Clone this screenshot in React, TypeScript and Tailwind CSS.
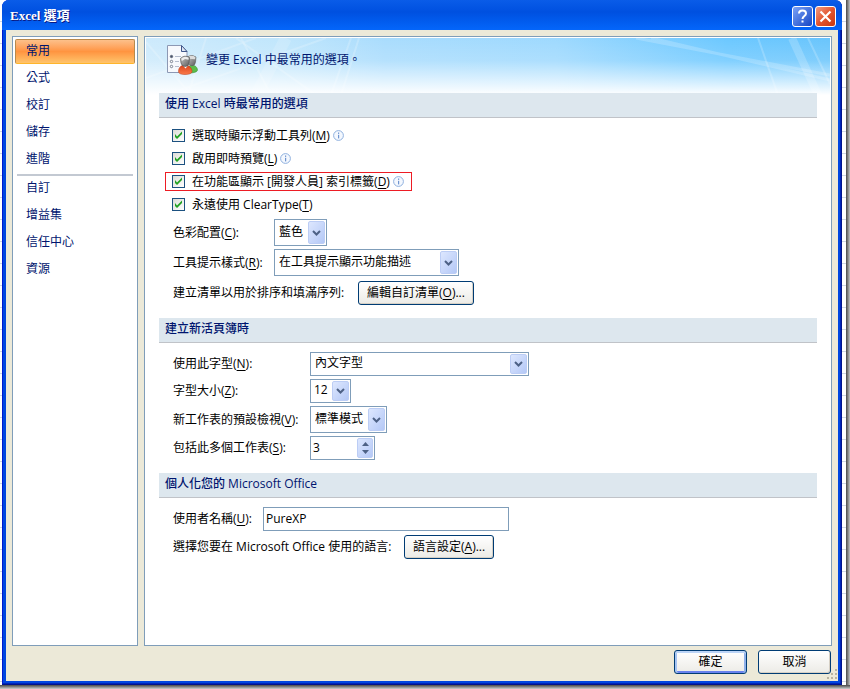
import React from 'react';

const NAV_TOP = ['常用', '公式', '校訂', '儲存', '進階'];
const NAV_BOTTOM = ['自訂', '增益集', '信任中心', '資源'];

const Key: React.FC<{ k: string }> = ({ k }) => (
  <>
    (<span className="underline underline-offset-2">{k}</span>)
  </>
);

const InfoIcon = () => (
  <svg width="11" height="11" viewBox="0 0 11 11" className="mb-px ml-[3px] shrink-0" aria-hidden="true">
    <circle cx="5.5" cy="5.5" r="4.9" fill="#f4f8fe" stroke="#8fb0de" />
    <rect x="5" y="2.5" width="1.2" height="1.4" fill="#6f94cf" />
    <rect x="5" y="4.8" width="1.2" height="3.6" fill="#6f94cf" />
  </svg>
);

const PageIcon = () => (
  <svg width="32" height="32" viewBox="0 0 32 32" aria-hidden="true">
    <defs>
      <linearGradient id="head" x1="0" y1="0" x2="1" y2="1">
        <stop offset="0" stopColor="#c9c9c9" />
        <stop offset="1" stopColor="#5a5a5a" />
      </linearGradient>
      <linearGradient id="red" x1="0" y1="0" x2="0" y2="1">
        <stop offset="0" stopColor="#d8431c" />
        <stop offset="1" stopColor="#fb7a4a" />
      </linearGradient>
    </defs>
    <path d="M1.5 1.5H15.5l5.500 6V28.500H1.500Z" fill="#f7f9fd" stroke="#8c98b4" />
    <path d="M15.500 1.500V7.500H21Z" fill="#dfe6f2" stroke="#3f568a" />
    <g fill="#fff" stroke="#5b6478" strokeWidth=".8">
      <circle cx="5.500" cy="12.500" r="1.200" fill="#4a5368" />
      <circle cx="5.500" cy="17.500" r="1.200" />
      <circle cx="5.500" cy="22.500" r="1.200" />
    </g>
    <path d="M9 12.500h6M9 17.500h4M9 22.500h4" stroke="#b4bccd" />
    <path d="M23 29c-1-5 0-8 2.500-8 3.500 0 6 2.500 6 5 0 1.700-3 3-8.500 3Z" fill="#5cbc4b" stroke="#318a2c" strokeWidth=".5" />
    <path d="M22 12.500q4-2.500 8 .5l-.5 5q-.5 3.800-3.500 3.800T21.500 18Z" fill="url(#head)" stroke="#5c5c5c" strokeWidth=".6" />
    <path d="M22.500 12.700q3.500-2 7 .5l-.5 2-6-.5Z" fill="#dcdcdc" />
    <path d="M12.500 27.500c0-4 2.500-6.500 6.500-6.500s7 3 7 6.500c0 2-3 3-7 3s-6.500-1-6.500-3Z" fill="url(#red)" stroke="#b93a18" strokeWidth=".5" />
    <path d="m17 21.500 2.500 3 2.500-3Z" fill="#fff" />
    <path d="M14.500 14.500q4-4 9-1l-.5 5.500q-.5 3.500-3.800 3.500t-4.200-3.500Z" fill="url(#head)" stroke="#555" strokeWidth=".7" />
    <path d="M15.300 14.600q3.500-3 7.400-.8l-.2 2-3.500-.8-3.200 2Z" fill="#ececec" />
  </svg>
);

const Banner = () => (
  <svg className="absolute inset-0 h-full w-full" viewBox="0 0 684 57" preserveAspectRatio="none" aria-hidden="true">
    <defs>
      <linearGradient id="sky" x1="0" x2="1" y1="0" y2="0">
        <stop offset="0" stopColor="#cdeafc" />
        <stop offset=".2" stopColor="#c0e6fc" />
        <stop offset=".35" stopColor="#a9dcfd" />
        <stop offset=".6" stopColor="#9ed9fe" />
        <stop offset=".85" stopColor="#6cc8ff" />
        <stop offset="1" stopColor="#6ac5fc" />
      </linearGradient>
      <linearGradient id="fade" x1="0" x2="0" y1="0" y2="1">
        <stop offset="0" stopColor="#fff" stopOpacity="0" />
        <stop offset=".4" stopColor="#fff" stopOpacity=".15" />
        <stop offset="1" stopColor="#fff" />
      </linearGradient>
    </defs>
    <rect width="684" height="57" fill="url(#sky)" />
    <g stroke="#fff" strokeOpacity=".2" fill="none">
      <path d="M0 4 45 57M0 40 110 0M20 57 180 0M60 0 42 57M90 0 170 57" strokeWidth="2" />
      <path d="M95 0 125 57M205 0 185 57M213 0 195 57" strokeWidth="2" />
      <path d="M140 0 110 57" strokeWidth="12" strokeOpacity=".15" />
      <path d="M490 0 684 37M505 0 684 42" strokeWidth="3" />
      <path d="M612 0 632 57M662 0 684 46" strokeWidth="2" />
      <path d="M646 0 672 57" strokeWidth="8" />
    </g>
    <rect width="684" height="57" fill="url(#fade)" />
  </svg>
);

const Chevron = () => (
  <span className="pointer-events-none absolute inset-y-px right-px flex w-[17px] items-center justify-center rounded-[2px] border border-[#bccdf5] bg-linear-to-br from-[#dde7fe] to-[#b4c8f6]">
    <svg width="9" height="6" viewBox="0 0 9 6" aria-hidden="true">
      <path d="m1 1 3.500 3.500L8 1" fill="none" stroke="#4d6185" strokeWidth="2" />
    </svg>
  </span>
);

interface ComboProps {
  id: string;
  value: string;
  className: string;
}

const Combo: React.FC<ComboProps> = ({ id, value, className }) => (
  <span className={`relative shrink-0 border border-[#7f9db9] bg-white ${className}`}>
    <select id={id} className="block h-full w-full appearance-none bg-transparent pb-[2px] outline-none">
      <option>{value}</option>
    </select>
    <Chevron />
  </span>
);

interface CheckProps {
  label: string;
  k: string;
  info?: boolean;
  marked?: boolean;
}

const Check: React.FC<CheckProps> = ({ label, k, info = true, marked }) => (
  <div className="flex h-[23px] items-center pl-[6px]">
    <label className={`flex h-[19px] items-center border pr-[7px] pl-[6px] ${marked ? 'border-[#ed1c24]' : 'border-transparent'}`}>
      <span className="relative mr-[7px] h-[13px] w-[13px]">
        <input type="checkbox" defaultChecked className="peer block h-[13px] w-[13px] appearance-none border border-[#1c5180] bg-linear-to-br from-[#dcdcd7] to-white" />
        <svg className="pointer-events-none absolute inset-0 hidden peer-checked:block" width="13" height="13" viewBox="0 0 13 13" aria-hidden="true">
          <path d="M3 5v3l2 2 5-5V2.500l-5 5Z" fill="#21a121" />
        </svg>
      </span>
      <span>
        {label}
        <Key k={k} />
      </span>
      {info && <InfoIcon />}
    </label>
  </div>
);

const Section: React.FC<{ title: string; children: React.ReactNode }> = ({ title, children }) => (
  <section className="relative mb-3">
    <h2 className="h-[25px] border-b border-[#c0c3c8] bg-[#dde7ee] px-[6px] pt-px leading-5 font-medium text-[#00156e]">{title}</h2>
    {children}
  </section>
);

const Row: React.FC<{ className?: string; children: React.ReactNode }> = ({ className = 'h-6', children }) => (
  <div className={`flex items-center ${className}`}>{children}</div>
);

const BUTTON = 'h-6 shrink-0 rounded-[3px] border border-[#003c74] bg-linear-to-b from-white to-[#ecebe6] px-2 shadow-[inset_-1px_-1px_0_#d6d0c5]';

const NavList: React.FC<{ items: string[]; active?: string }> = ({ items, active }) => (
  <ul className="flex flex-col gap-[2px]">
    {items.map((item) => (
      <li key={item}>
        <button
          className={`block h-[25px] w-full rounded-[2px] border pb-[2px] pl-[10px] text-left text-[#00156e] ${
            item === active
              ? 'border-[#b98a4c] border-b-[#ffb52b] bg-linear-to-b from-[#fcc08a] via-[#ff9440] via-50% to-[#ffc46b]'
              : 'border-transparent'
          }`}
        >
          {item}
        </button>
      </li>
    ))}
  </ul>
);

export default function App() {
  return (
    <div className="flex min-h-screen flex-col bg-linear-to-t from-[#d0d0d0] to-[#4a4a4a] to-[4px] font-['Open_Sans','Noto_Sans_CJK_TC',sans-serif] text-[12px] leading-4 text-black">
      <div className="flex grow bg-linear-to-l from-[#c4c4c4] to-[#4a4a4a] to-[4px] pr-1 mb-1">
        <div className="flex grow bg-[repeating-linear-gradient(to_bottom,#fff_0px,#fff_21px,#d0d7e5_21px,#d0d7e5_22px)] pr-1 pl-[2px]">
          <div className="flex grow flex-col rounded-t-[7px] bg-[#0046e0] shadow-[inset_-1px_-1px_0_#00138c,inset_1px_0_0_#0019cf,inset_-2px_-2px_0_#0024b8]">
            <header className="flex h-[30px] items-center gap-[2px] rounded-t-[7px] bg-linear-to-b from-[#0a5ce8] via-[#0050e0] via-40% to-[#0466fb] pt-[2px] pr-[6px] pl-2">
              <h1 className="grow font-['Liberation_Serif','Noto_Sans_CJK_TC',serif] text-[13px] font-bold text-white [text-shadow:1px_1px_0_#0a1883]">
                Excel 選項
              </h1>
              <button aria-label="說明" className="flex h-[21px] w-[21px] items-center justify-center rounded-[3px] border border-white bg-linear-to-br from-[#7ba2f7] to-[#1743c4]">
                <svg width="13" height="15" viewBox="0 0 13 15" aria-hidden="true">
                  <path d="M3 4.500C3 2.500 4.500 1.500 6.500 1.500S10 2.700 10 4.500C10 7 6.500 7 6.500 10" fill="none" stroke="#fff" strokeWidth="2" />
                  <rect x="5.500" y="11.500" width="2" height="2" fill="#fff" />
                </svg>
              </button>
              <button aria-label="關閉" className="flex h-[21px] w-[21px] items-center justify-center rounded-[3px] border border-white bg-linear-to-br from-[#f09a80] via-[#e2542e] to-[#c8370d]">
                <svg width="13" height="13" viewBox="0 0 13 13" aria-hidden="true">
                  <path d="m1.500 1.500 10 10M11.500 1.500l-10 10" stroke="#fff" strokeWidth="2.200" />
                </svg>
              </button>
            </header>

            <div className="mx-1 mb-1 flex grow flex-col bg-[#ece9d8] px-[6px] pt-[6px]">
              <div className="flex grow gap-[6px]">
                <nav className="w-[126px] shrink-0 border border-[#7f9db9] bg-white px-[2px] pt-[2px]">
                  <NavList items={NAV_TOP} active="常用" />
                  <hr className="mx-[2px] mt-[2px] border-0 border-t-2 border-[#c3c9d2]" />
                  <NavList items={NAV_BOTTOM} />
                </nav>

                <main className="grow border border-[#7f9db9] bg-white p-px">
                  <div className="relative">
                    <div className="absolute inset-x-0 top-0 h-[57px]">
                      <Banner />
                    </div>
                    <div className="relative flex h-[55px] items-center gap-2 pb-3 pl-5">
                      <PageIcon />
                      <p className="text-[#00156e]">變更 Excel 中最常用的選項。</p>
                    </div>
                  </div>

                  <div className="px-[13px]">
                    <Section title="使用 Excel 時最常用的選項">
                      <div className="pt-[6px]">
                        <Check label="選取時顯示浮動工具列" k="M" />
                        <Check label="啟用即時預覽" k="L" />
                        <Check label="在功能區顯示 [開發人員] 索引標籤" k="D" marked />
                        <Check label="永遠使用 ClearType" k="T" info={false} />
                      </div>
                      <div className="flex flex-col gap-[3px] pt-[3px] pl-[14px]">
                        <Row className="h-[27px]">
                          <label htmlFor="color" className="w-[101px]">色彩配置<Key k="C" />:</label>
                          <Combo id="color" value="藍色" className="h-[27px] w-[53px] pl-1" />
                        </Row>
                        <Row className="h-[27px]">
                          <label htmlFor="tip" className="w-[101px]">工具提示樣式<Key k="R" />:</label>
                          <Combo id="tip" value="在工具提示顯示功能描述" className="h-[27px] w-[185px] pl-1" />
                        </Row>
                        <Row className="h-[27px]">
                          <span className="w-[185px]">建立清單以用於排序和填滿序列:</span>
                          <button className={BUTTON}>編輯自訂清單<Key k="O" />...</button>
                        </Row>
                      </div>
                    </Section>

                    <Section title="建立新活頁簿時">
                      <div className="flex flex-col gap-[3px] pt-[9px] pb-px pl-[14px]">
                        <Row>
                          <label htmlFor="font" className="w-[137px]">使用此字型<Key k="N" />:</label>
                          <Combo id="font" value="內文字型" className="h-6 w-[219px] pl-1" />
                        </Row>
                        <Row>
                          <label htmlFor="size" className="w-[137px]">字型大小<Key k="Z" />:</label>
                          <Combo id="size" value="12" className="h-6 w-[41px] pl-[3px]" />
                        </Row>
                        <Row className="h-[27px]">
                          <label htmlFor="view" className="w-[137px]">新工作表的預設檢視<Key k="V" />:</label>
                          <Combo id="view" value="標準模式" className="h-[27px] w-[77px] pl-1" />
                        </Row>
                        <Row>
                          <label htmlFor="sheets" className="w-[137px]">包括此多個工作表<Key k="S" />:</label>
                          <span className="relative h-6 w-[65px] border border-[#7f9db9] bg-white">
                            <input id="sheets" defaultValue="3" className="block h-full w-full bg-transparent pb-[2px] pl-[2px] outline-none" />
                            <span className="pointer-events-none absolute inset-y-px right-px flex w-4 flex-col items-center justify-evenly rounded-[2px] border border-[#bccdf5] bg-linear-to-br from-[#dde7fe] to-[#b4c8f6]">
                              <svg width="7" height="4" viewBox="0 0 7 4" aria-hidden="true">
                                <path d="M0 4 3.500 0 7 4Z" fill="#4d6185" />
                              </svg>
                              <svg width="7" height="4" viewBox="0 0 7 4" aria-hidden="true">
                                <path d="M0 0 3.500 4 7 0Z" fill="#4d6185" />
                              </svg>
                            </span>
                          </span>
                        </Row>
                      </div>
                    </Section>

                    <Section title="個人化您的 Microsoft Office">
                      <div className="flex flex-col gap-1 pt-[9px] pl-[14px]">
                        <Row>
                          <label htmlFor="user" className="w-[90px]">使用者名稱<Key k="U" />:</label>
                          <input id="user" defaultValue="PureXP" className="h-6 w-[246px] border border-[#7f9db9] bg-white pb-[2px] pl-[2px] outline-none" />
                        </Row>
                        <Row>
                          <span className="w-[231px]">選擇您要在 Microsoft Office 使用的語言:</span>
                          <button className={BUTTON}>語言設定<Key k="A" />...</button>
                        </Row>
                      </div>
                    </Section>
                  </div>
                </main>
              </div>

              <footer className="relative flex h-[35px] shrink-0 justify-end gap-[11px] pt-1 pr-px">
                <button className="h-6 w-[73px] rounded-[3px] border border-[#003c74] bg-linear-to-b from-white to-[#ecebe6] shadow-[inset_0_2px_0_#bcd4f6,inset_2px_0_0_#a6c4f2,inset_-2px_0_0_#8fb1ea,inset_0_-2px_0_#6982ee]">
                  確定
                </button>
                <button className={`${BUTTON} w-[73px]`}>取消</button>
                <svg className="absolute right-[-5px] bottom-[2px]" width="11" height="11" viewBox="0 0 11 11" aria-hidden="true">
                  <path d="M9 1h2v2H9zM5 5h2v2H5zM9 5h2v2H9zM1 9h2v2H1zM5 9h2v2H5zM9 9h2v2H9z" fill="#b8b4a2" />
                </svg>
              </footer>
            </div>
          </div>
        </div>
      </div>
    </div>
  );
}
